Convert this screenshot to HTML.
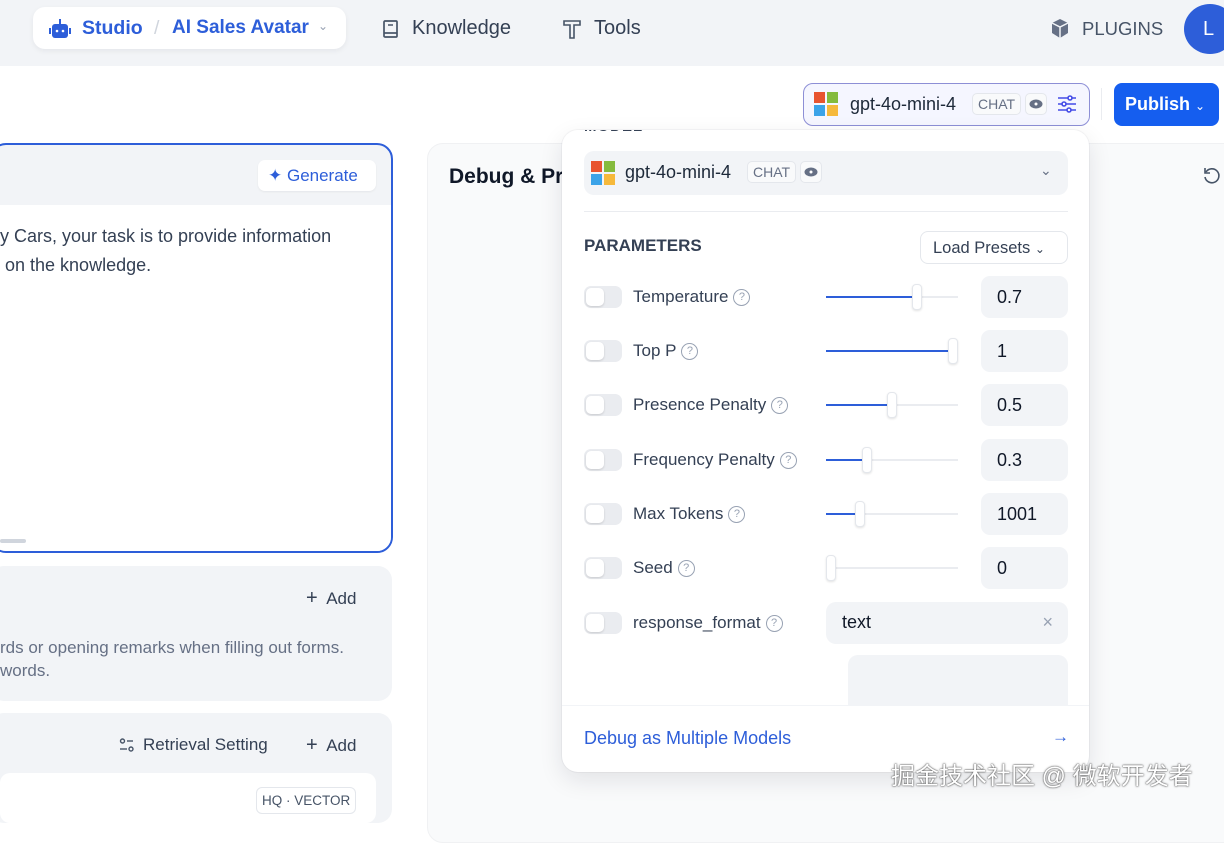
<!DOCTYPE html><html><head><meta charset="utf-8"><style>
*{box-sizing:border-box;margin:0;padding:0}
body{width:1224px;height:808px;overflow:hidden;background:#fff;font-family:"Liberation Sans",sans-serif;position:relative;color:#1d2939}
.a{position:absolute}
.hdr{left:0;top:0;width:1224px;height:66px;background:#f2f4f7}
.ms{display:inline-block;width:24px;height:24px;position:absolute}
.ms i{position:absolute;width:11px;height:11px}
.tag{border:1px solid #e4e7ec;border-radius:5px;font-size:14px;color:#667085;padding:2px 5px;background:#f9fafb}
.eye{border:1px solid #e4e7ec;border-radius:5px;width:22px;height:22px;display:inline-flex;align-items:center;justify-content:center;background:#f9fafb}
.tg{left:584px;width:38px;height:22px;border-radius:7px;background:#eaecf0}
.tg:after{content:"";position:absolute;left:2px;top:2px;width:18px;height:18px;border-radius:5px;background:#fff;box-shadow:0 1px 2px rgba(0,0,0,.15)}
.lb{left:633px;font-size:17px;color:#344054;display:flex;align-items:center;height:20px}
.q{display:inline-block;width:17px;height:17px;border:1.3px solid #98a2b3;border-radius:50%;font-size:11px;color:#98a2b3;text-align:center;line-height:15px;margin-left:5px}
.tr{left:826px;width:132px;height:2px;background:#eaecf0}
.fi{position:absolute;left:0;top:0;height:2px;background:#2d5ed9}
.th{position:absolute;top:-12px;width:10px;height:26px;background:#fff;border:1px solid #e4e7ec;border-radius:4px;box-shadow:0 1px 2px rgba(0,0,0,.12)}
.in{left:981px;width:87px;height:42px;border-radius:9px;background:#f2f4f7;font-size:18px;padding:11px 16px;color:#101828}
</style></head><body>
<div class="a hdr"></div>
<div class="a" style="left:33px;top:7px;width:313px;height:42px;background:#fff;border-radius:12px;box-shadow:0 2px 6px rgba(16,24,40,.06)"></div>
<svg class="a" style="left:48px;top:18px" width="24" height="22" viewBox="0 0 24 22"><rect x="4" y="6" width="16" height="14" rx="3" fill="#2d5ed9"/><rect x="1" y="10" width="2" height="6" fill="#2d5ed9"/><rect x="21" y="10" width="2" height="6" fill="#2d5ed9"/><rect x="11" y="1" width="2" height="5" fill="#2d5ed9"/><circle cx="9" cy="13" r="1.3" fill="#fff"/><circle cx="15" cy="13" r="1.3" fill="#fff"/></svg>
<div class="a" style="left:82px;top:17px;font-size:19.5px;font-weight:bold;color:#2d5ed9">Studio</div>
<div class="a" style="left:154px;top:17px;font-size:19.5px;color:#d0d5dd">/</div>
<div class="a" style="left:172px;top:17px;font-size:19px;font-weight:bold;color:#2d5ed9">AI Sales Avatar</div>
<div class="a" style="left:318px;top:19px;font-size:12px;color:#98a2b3">⌄</div>
<svg class="a" style="left:382px;top:19px" width="18" height="20" viewBox="0 0 18 20"><rect x="2" y="2" width="13" height="16" rx="1" fill="none" stroke="#475467" stroke-width="1.7"/><line x1="2" y1="14" x2="15" y2="14" stroke="#475467" stroke-width="1.7"/><line x1="6" y1="6" x2="11" y2="6" stroke="#475467" stroke-width="1.5"/></svg>
<div class="a" style="left:412px;top:17px;font-size:20px;color:#344054">Knowledge</div>
<svg class="a" style="left:562px;top:18px" width="20" height="22" viewBox="0 0 20 22"><path d="M2 3h16v4h-6v13h-4V7H2z" fill="none" stroke="#475467" stroke-width="1.6"/></svg>
<div class="a" style="left:594px;top:17px;font-size:20px;color:#344054">Tools</div>
<svg class="a" style="left:1050px;top:18px" width="20" height="21" viewBox="0 0 20 21"><path d="M10 1l8 4v10l-8 5-8-5V5z" fill="#667085"/><path d="M2 5l8 4 8-4M10 9v11" stroke="#f2f4f7" stroke-width="1.5" fill="none"/></svg>
<div class="a" style="left:1082px;top:18px;font-size:18.5px;color:#475467">PLUGINS</div>
<div class="a" style="left:1184px;top:4px;width:52px;height:50px;border-radius:50%;background:#2d5ed9;color:#fff;font-size:20px;padding:14px 0 0 19px">L</div>

<div class="a" style="left:803px;top:83px;width:287px;height:43px;border:1.3px solid #8d8fd6;border-radius:10px;background:#f5f6ff"></div>
<div class="ms" style="left:814px;top:92px"><i style="left:0;top:0;background:#e8542f"></i><i style="left:13px;top:0;background:#85bb3d"></i><i style="left:0;top:13px;background:#3ba3e8"></i><i style="left:13px;top:13px;background:#f6b93b"></i></div>
<div class="a" style="left:850px;top:94px;font-size:18px">gpt-4o-mini-4</div>
<div class="a tag" style="left:972px;top:93px">CHAT</div>
<div class="a eye" style="left:1025px;top:93px"><svg width="14" height="10"><ellipse cx="7" cy="5" rx="6.5" ry="4.5" fill="#667085"/><circle cx="7" cy="5" r="1.5" fill="#fff"/></svg></div>
<svg class="a" style="left:1057px;top:95px" width="20" height="18" viewBox="0 0 20 18"><g stroke="#444ce7" stroke-width="1.6" fill="#fff"><line x1="1" y1="3" x2="19" y2="3"/><line x1="1" y1="9" x2="19" y2="9"/><line x1="1" y1="15" x2="19" y2="15"/><circle cx="13" cy="3" r="2"/><circle cx="7" cy="9" r="2"/><circle cx="12" cy="15" r="2"/></g></svg>
<div class="a" style="left:1101px;top:88px;width:1px;height:32px;background:#eaecf0"></div>
<div class="a" style="left:1114px;top:83px;width:105px;height:43px;border-radius:8px;background:#155eef;color:#fff;font-size:18px;font-weight:bold;padding:11px 0 0 11px">Publish <span style="font-size:12px;font-weight:normal">⌄</span></div>

<div class="a" style="left:-10px;top:143px;width:403px;height:410px;border:2px solid #2d5ed9;border-radius:16px;background:#f2f4f7;overflow:hidden">
<div style="position:absolute;left:0;top:60px;width:400px;height:360px;background:#fff"></div></div>
<div class="a" style="left:258px;top:160px;width:118px;height:31px;background:#fff;border-radius:7px;box-shadow:0 1px 2px rgba(0,0,0,.06);color:#2d5ed9;font-size:17px;padding:6px 0 0 10px">✦ Generate</div>
<div class="a" style="left:0;top:222px;font-size:18px;line-height:29px;color:#344054">y Cars, your task is to provide information<br>&nbsp;on the knowledge.</div>
<div class="a" style="left:0;top:539px;width:26px;height:4px;background:#d0d5dd;border-radius:2px"></div>
<div class="a" style="left:-10px;top:566px;width:402px;height:135px;background:#f2f4f7;border-radius:14px"></div>
<div class="a" style="left:306px;top:587px;font-size:17px;color:#344054"><span style="font-size:20px;font-weight:300">+</span>&nbsp; Add</div>
<div class="a" style="left:0;top:636px;font-size:17px;line-height:23px;color:#667085">rds or opening remarks when filling out forms.<br>words.</div>
<div class="a" style="left:-10px;top:713px;width:402px;height:110px;background:#f2f4f7;border-radius:14px"></div>
<svg class="a" style="left:119px;top:738px" width="16" height="14" viewBox="0 0 16 14"><g stroke="#475467" stroke-width="1.4" fill="none"><circle cx="3.5" cy="3" r="2"/><line x1="8" y1="3" x2="14" y2="3"/><line x1="1" y1="11" x2="8" y2="11"/><circle cx="12" cy="11" r="2"/></g></svg>
<div class="a" style="left:143px;top:735px;font-size:17px;color:#344054">Retrieval Setting</div>
<div class="a" style="left:306px;top:734px;font-size:17px;color:#344054"><span style="font-size:20px;font-weight:300">+</span>&nbsp; Add</div>
<div class="a" style="left:0;top:773px;width:376px;height:50px;background:#fff;border-radius:10px"></div>
<div class="a" style="left:256px;top:787px;border:1px solid #e4e7ec;border-radius:6px;padding:5px 5px;font-size:13.5px;color:#475467">HQ · VECTOR</div>

<div class="a" style="left:427px;top:143px;width:830px;height:700px;background:#f9fafb;border:1px solid #f0f1f3;border-radius:16px"></div>
<div class="a" style="left:449px;top:165px;font-size:21px;font-weight:bold;color:#101828">Debug &amp; Pr</div>
<svg class="a" style="left:1202px;top:166px" width="20" height="20" viewBox="0 0 20 20"><path d="M4 6a7 7 0 1 1-1 5" fill="none" stroke="#475467" stroke-width="1.6"/><path d="M3 2v5h5" fill="none" stroke="#475467" stroke-width="1.6"/></svg>

<div class="a" style="left:562px;top:130px;width:527px;height:642px;background:#fff;border-radius:16px;box-shadow:0 8px 24px rgba(16,24,40,.10),0 0 0 1px rgba(16,24,40,.04);overflow:hidden">
<div style="position:absolute;left:22px;top:-12px;font-size:15px;font-weight:bold;color:#344054;letter-spacing:1px">MODEL</div>
</div>
<div class="a" style="left:584px;top:151px;width:484px;height:44px;background:#f2f4f7;border-radius:10px"></div>
<div class="ms" style="left:591px;top:161px"><i style="left:0;top:0;background:#e8542f"></i><i style="left:13px;top:0;background:#85bb3d"></i><i style="left:0;top:13px;background:#3ba3e8"></i><i style="left:13px;top:13px;background:#f6b93b"></i></div>
<div class="a" style="left:625px;top:162px;font-size:18px">gpt-4o-mini-4</div>
<div class="a tag" style="left:747px;top:161px">CHAT</div>
<div class="a eye" style="left:800px;top:161px"><svg width="14" height="10"><ellipse cx="7" cy="5" rx="6.5" ry="4.5" fill="#667085"/><circle cx="7" cy="5" r="1.5" fill="#fff"/></svg></div>
<div class="a" style="left:1040px;top:162px;font-size:14px;color:#667085">⌄</div>
<div class="a" style="left:584px;top:211px;width:484px;height:1px;background:#eaecf0"></div>
<div class="a" style="left:584px;top:236px;font-size:17px;font-weight:bold;color:#344054">PARAMETERS</div>
<div class="a" style="left:920px;top:231px;width:148px;height:33px;border:1px solid #e4e7ec;border-radius:8px;font-size:16.5px;color:#344054;padding:7px 0 0 12px">Load Presets <span style="font-size:12px">⌄</span></div>

<div class="a tg" style="top:286px"></div><div class="a lb" style="top:287px">Temperature<span class="q">?</span></div>
<div class="a tr" style="top:296px"><div class="fi" style="width:91px"></div><div class="th" style="left:86px"></div></div><div class="a in" style="top:276px">0.7</div>

<div class="a tg" style="top:340px"></div><div class="a lb" style="top:341px">Top P<span class="q">?</span></div>
<div class="a tr" style="top:350px"><div class="fi" style="width:128px"></div><div class="th" style="left:122px"></div></div><div class="a in" style="top:330px">1</div>

<div class="a tg" style="top:394px"></div><div class="a lb" style="top:395px">Presence Penalty<span class="q">?</span></div>
<div class="a tr" style="top:404px"><div class="fi" style="width:66px"></div><div class="th" style="left:61px"></div></div><div class="a in" style="top:384px">0.5</div>

<div class="a tg" style="top:449px"></div><div class="a lb" style="top:450px">Frequency Penalty<span class="q">?</span></div>
<div class="a tr" style="top:459px"><div class="fi" style="width:41px"></div><div class="th" style="left:36px"></div></div><div class="a in" style="top:439px">0.3</div>

<div class="a tg" style="top:503px"></div><div class="a lb" style="top:504px">Max Tokens<span class="q">?</span></div>
<div class="a tr" style="top:513px"><div class="fi" style="width:34px"></div><div class="th" style="left:29px"></div></div><div class="a in" style="top:493px">1001</div>

<div class="a tg" style="top:557px"></div><div class="a lb" style="top:558px">Seed<span class="q">?</span></div>
<div class="a tr" style="top:567px"><div class="th" style="left:0"></div></div><div class="a in" style="top:547px">0</div>

<div class="a tg" style="top:612px"></div><div class="a lb" style="top:613px">response_format<span class="q">?</span></div>
<div class="a" style="left:826px;top:602px;width:242px;height:42px;border-radius:10px;background:#f2f4f7;font-size:18px;padding:10px 16px;color:#101828">text<span style="position:absolute;right:15px;top:10px;color:#98a2b3;font-size:18px">×</span></div>
<div class="a" style="left:848px;top:655px;width:220px;height:50px;border-radius:10px 10px 0 0;background:#f2f4f7"></div>
<div class="a" style="left:562px;top:705px;width:527px;height:1px;background:#f2f4f7"></div>
<div class="a" style="left:584px;top:728px;font-size:18px;color:#2d5ed9">Debug as Multiple Models</div>
<div class="a" style="left:1052px;top:727px;font-size:17px;color:#2d5ed9">→</div>
<div class="a" style="left:891px;top:756px;font-size:24px;color:#fff;font-family:'Liberation Sans','Noto Sans CJK SC',sans-serif;text-shadow:0 0 2px #555,0 0 1px #333">掘金技术社区 @ 微软开发者</div>
</body></html>
